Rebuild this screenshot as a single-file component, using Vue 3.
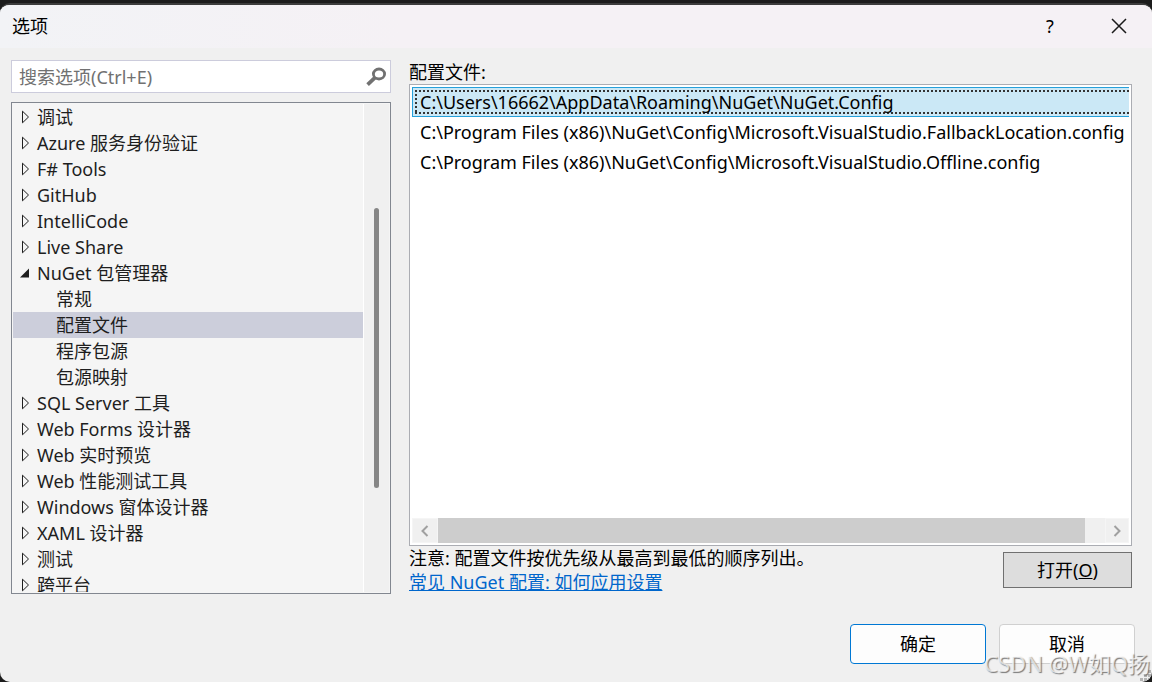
<template>
  <div class="desktop">
    <div class="dialog" role="dialog" aria-labelledby="dialog-title">
      <header class="title-bar">
        <h1 id="dialog-title">选项</h1>
        <div class="title-actions">
          <button type="button" class="title-btn help" aria-label="帮助">?</button>
          <button type="button" class="title-btn" aria-label="关闭">
            <svg width="16" height="16" viewBox="0 0 16 16">
              <path d="M1 1L15 15M15 1L1 15" fill="none" stroke="#1a1a1a" stroke-width="1.5" />
            </svg>
          </button>
        </div>
      </header>

      <main class="content">
        <!-- Search and category tree -->
        <section class="sidebar">
          <div class="search-box">
            <input v-model="search" type="text" placeholder="搜索选项(Ctrl+E)" aria-label="搜索选项" />
            <svg class="search-icon" width="20" height="20" viewBox="0 0 20 20">
              <ellipse cx="13" cy="7" rx="5.6" ry="5" fill="none" stroke="#717171" stroke-width="2.8" />
              <path d="M9 10.6L1.6 17.6" fill="none" stroke="#717171" stroke-width="3.8" />
            </svg>
          </div>

          <div class="tree-panel">
            <ul class="tree" role="tree" aria-label="选项类别">
              <li
                v-for="node in nodes"
                :key="node.name"
                class="tree-item"
                :class="{ child: node.child, selected: node.name === selectedNode }"
                role="treeitem"
                :aria-selected="node.name === selectedNode"
                @click="selectedNode = node.name"
              >
                <span v-if="!node.child" class="arrow">
                  <svg v-if="node.open" width="12" height="14" viewBox="0 0 12 14">
                    <path d="M0 11.5H9V2.5Z" fill="#1e1e1e" />
                  </svg>
                  <svg v-else width="12" height="14" viewBox="0 0 12 14">
                    <path d="M2.5 1.2V12.8L8.5 7Z" fill="none" stroke="#1e1e1e" stroke-width="1" />
                  </svg>
                </span>
                <span>{{ node.name }}</span>
              </li>
            </ul>
            <div class="v-scroll">
              <div class="v-thumb"></div>
            </div>
          </div>
        </section>

        <!-- Configuration files -->
        <section class="page">
          <span id="files-label" class="page-label">配置文件:</span>
          <div class="file-box">
            <ul class="files" role="listbox" aria-labelledby="files-label">
              <li
                v-for="file in files"
                :key="file"
                class="file"
                :class="{ selected: file === selectedFile }"
                role="option"
                :aria-selected="file === selectedFile"
                @click="selectedFile = file"
              >
                <span>{{ file }}</span>
              </li>
            </ul>
            <div class="h-scroll">
              <button type="button" class="scroll-btn" aria-label="向左滚动">
                <svg width="12" height="14" viewBox="0 0 12 14">
                  <path d="M8.5 2L3.5 7L8.5 12" fill="none" stroke="#a0a0a0" stroke-width="2" />
                </svg>
              </button>
              <div class="h-track"><div class="h-thumb"></div></div>
              <button type="button" class="scroll-btn" aria-label="向右滚动">
                <svg width="12" height="14" viewBox="0 0 12 14">
                  <path d="M3.5 2L8.5 7L3.5 12" fill="none" stroke="#a0a0a0" stroke-width="2" />
                </svg>
              </button>
            </div>
          </div>
          <div class="page-footer">
            <div class="notes">
              <p>注意: 配置文件按优先级从最高到最低的顺序列出。</p>
              <a href="#">常见 NuGet 配置: 如何应用设置</a>
            </div>
            <button type="button" class="open-btn">打开(<u>O</u>)</button>
          </div>
        </section>
      </main>

      <footer class="dialog-footer">
        <button type="button" class="btn btn-default">确定</button>
        <button type="button" class="btn">取消</button>
      </footer>

      <svg class="grip" width="12" height="12" viewBox="0 0 12 12">
        <path d="M8 0h3v3h-3zM4 4h3v3h-3zM8 4h3v3h-3zM0 8h3v3h-3zM4 8h3v3h-3zM8 8h3v3h-3z" fill="#b4b4b4" />
      </svg>
      <span class="watermark">CSDN @W如Q扬</span>
    </div>
  </div>
</template>

<script setup>
import { ref } from 'vue'

const search = ref('')
const selectedNode = ref('配置文件')

const nodes = [
  { name: '调试' },
  { name: 'Azure 服务身份验证' },
  { name: 'F# Tools' },
  { name: 'GitHub' },
  { name: 'IntelliCode' },
  { name: 'Live Share' },
  { name: 'NuGet 包管理器', open: true },
  { name: '常规', child: true },
  { name: '配置文件', child: true },
  { name: '程序包源', child: true },
  { name: '包源映射', child: true },
  { name: 'SQL Server 工具' },
  { name: 'Web Forms 设计器' },
  { name: 'Web 实时预览' },
  { name: 'Web 性能测试工具' },
  { name: 'Windows 窗体设计器' },
  { name: 'XAML 设计器' },
  { name: '测试' },
  { name: '跨平台' }
]

const files = [
  'C:\\Users\\16662\\AppData\\Roaming\\NuGet\\NuGet.Config',
  'C:\\Program Files (x86)\\NuGet\\Config\\Microsoft.VisualStudio.FallbackLocation.config',
  'C:\\Program Files (x86)\\NuGet\\Config\\Microsoft.VisualStudio.Offline.config'
]
const selectedFile = ref(files[0])
</script>

<style>
body { margin: 0; background: #1c1c1c; }
</style>

<style scoped>
* { box-sizing: border-box; }
.desktop { height: 100vh; padding-top: 3px; background: #1c1c1c; font-family: "Noto Sans", "Noto Sans CJK SC", sans-serif; font-size: 18px; line-height: 24px; color: #000; }
.dialog { position: relative; display: flex; flex-direction: column; height: 100%; background: #f0f0f0; border-top: 2px solid #3c3c3c; border-radius: 10px; overflow: hidden; }
button, input { font: inherit; color: inherit; }
button { padding: 0; cursor: pointer; }
ul { list-style: none; margin: 0; padding: 0; }

.title-bar { display: flex; justify-content: space-between; align-items: center; height: 43px; padding: 0 0 2px 12px; background: linear-gradient(90deg, #f2f3f6, #f5f1f5 35%); }
.title-bar h1 { margin: 0; font-size: 18px; font-weight: 400; }
.title-actions { display: flex; height: 100%; }
.title-btn { display: flex; align-items: center; justify-content: center; width: 72px; border: none; background: transparent; }
.title-btn:last-child { width: 66px; }

.content { display: grid; grid-template-columns: 380px minmax(0, 1fr); grid-template-rows: minmax(0, 1fr); gap: 18px; flex: 1; min-height: 0; padding: 12px 20px 0 11px; }
.sidebar { display: flex; flex-direction: column; gap: 9px; min-height: 0; }
.search-box { display: flex; align-items: center; height: 33px; flex: none; padding: 0 4px 0 7px; background: #fff; border: 1px solid #ccccdc; }
.search-box input { flex: 1; min-width: 0; padding: 0; border: none; outline: none; background: transparent; }
.search-box input::placeholder { color: #717171; opacity: 1; }

.tree-panel { display: flex; flex: 1; min-height: 0; padding: 1px; background: #f5f5f5; border: 1px solid #828790; }
.tree { flex: 1; overflow: hidden; color: #1e1e1e; }
.tree-item { display: flex; align-items: center; height: 26px; padding-left: 7px; white-space: nowrap; cursor: default; }
.tree-item.child { padding-left: 43px; }
.tree-item.selected { background: #cccedb; }
.arrow { display: flex; width: 17px; }
.v-scroll { width: 26px; padding: 104px 0 0 10px; background: #f0f0f0; border-left: 1px solid #fff; }
.v-thumb { width: 5px; height: 73%; background: #868686; border-radius: 3px; }

.page { display: flex; flex-direction: column; min-height: 0; }
.page-label { display: block; }
.file-box { display: flex; flex-direction: column; flex: 1; min-height: 0; padding: 2px; background: #fff; border: 1px solid #abadb3; }
.files { flex: 1; overflow: hidden; }
.file { display: flex; align-items: center; height: 30px; padding: 2px 0 2px 2px; border: 1px solid transparent; border-right: none; white-space: nowrap; cursor: default; }
.file span { flex: 1; padding-left: 5px; }
.file.selected { background: #cbe8f6; border-color: #26a0da; }
/* dotted focus rectangle, open on the right */
.file.selected span {
  background-image: linear-gradient(90deg, #333 50%, transparent 50%), linear-gradient(90deg, #333 50%, transparent 50%), linear-gradient(#333 50%, transparent 50%);
  background-size: 4px 2px, 4px 2px, 2px 4px;
  background-position: left top, left bottom, left top;
  background-repeat: repeat-x, repeat-x, repeat-y;
}
.h-scroll { display: flex; height: 25px; background: #f0f0f0; }
.scroll-btn { display: flex; align-items: center; justify-content: center; width: 26px; border: 1px solid #f5f5f5; background: #f0f0f0; }
.scroll-btn:last-child { width: 24px; }
.h-track { flex: 1; }
.h-thumb { width: 97%; height: 100%; background: #cdcdcd; }

.page-footer { display: flex; justify-content: space-between; align-items: flex-start; height: 48px; }
.notes p { margin: 0; }
.notes a { color: #0066cc; }
.open-btn { width: 129px; height: 36px; margin-top: 6px; background: #ddd; border: 1px solid #707070; }

.dialog-footer { display: flex; justify-content: flex-end; gap: 13px; padding: 30px 17px 18px; }
.btn { width: 136px; height: 40px; background: #fdfdfd; border: 1px solid #d0d0d0; border-radius: 4px; }
.btn-default { border-color: #0078d4; }

.grip { position: absolute; right: 0; bottom: 0; }
.watermark { position: absolute; right: 2px; bottom: 5px; font-size: 22px; line-height: 28px; color: rgba(255, 255, 255, 0.7); text-shadow: 1px 1px 1px rgba(90, 90, 90, 0.8); pointer-events: none; }
</style>
